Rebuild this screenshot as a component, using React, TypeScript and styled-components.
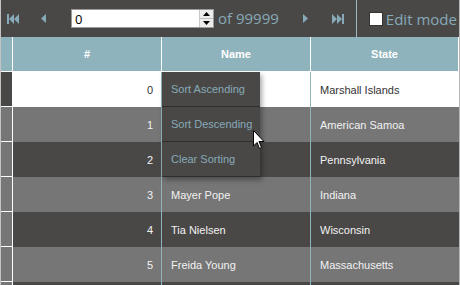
import React from 'react';
import styled, { createGlobalStyle } from 'styled-components';

const GlobalStyle = createGlobalStyle`
  html, body { margin: 0; padding: 0; background: #ffffff; }
  body { font-family: "Liberation Sans", Arial, sans-serif; }
`;

const DARK = '#4a4846';
const GRAY = '#767676';
const HEAD = '#8fb3bc';
const TEAL = '#86aab8';

const Frame = styled.div`
  position: relative;
  width: 460px;
  height: 285px;
  overflow: hidden;
  box-sizing: border-box;
  border-left: 1px solid #c4c4c4;
  border-right: 1px solid #b8b8b8;
  background: ${GRAY};
`;

const Toolbar = styled.div`
  display: flex;
  align-items: center;
  height: 37px;
  background: ${DARK};
  font-family: "Open Sans", "DejaVu Sans", sans-serif;
  color: ${TEAL};
  white-space: nowrap;

  & > * {
    flex-shrink: 0;
  }
`;

const NavButton = styled.button<{ $gap: number }>`
  display: flex;
  align-items: center;
  justify-content: center;
  padding: 0;
  margin-left: ${(p) => p.$gap}px;
  width: 14px;
  height: 14px;
  border: 0;
  background: none;
  color: ${TEAL};
`;

const PageBox = styled.div`
  display: flex;
  align-items: stretch;
  margin-left: 21px;
  width: 143px;
  height: 19px;
  box-sizing: border-box;
  background: #ffffff;
  border: 1px solid #9a9a9a;
`;

const PageInput = styled.input`
  flex: 1;
  min-width: 0;
  border: 0;
  outline: none;
  padding: 0 0 0 3px;
  font-family: "Open Sans", "DejaVu Sans", sans-serif;
  font-size: 13px;
  color: #000;
  background: transparent;
`;

const Spinner = styled.div`
  display: flex;
  flex-direction: column;
  width: 13px;
  border-left: 1px solid #c8c8c8;
  background: #ececec;
`;

const SpinHalf = styled.div<{ $down?: boolean }>`
  flex: 1;
  display: flex;
  align-items: center;
  justify-content: center;
  border-top: ${(p) => (p.$down ? '1px solid #bdbdbd' : '0')};
`;

const OfText = styled.span`
  margin-left: 4px;
  font-size: 15px;
  line-height: 1;
`;

const Separator = styled.div`
  margin-left: 11px;
  align-self: stretch;
  width: 1px;
  background: #9fb9c2;
`;

const EditLabel = styled.label`
  display: flex;
  align-items: center;
  margin-left: 12px;
  font-size: 15px;
`;

const Check = styled.span`
  display: inline-block;
  width: 12px;
  height: 12px;
  margin-right: 3px;
  background: #ffffff;
  border: 1px solid #333;
`;

const Grid = styled.div`
  display: grid;
  grid-template-columns: 12px 149px 149px 148px;
  grid-auto-rows: 35px;
`;

const HeadCell = styled.div`
  display: flex;
  align-items: center;
  justify-content: center;
  height: 34px;
  background: ${HEAD};
  border-right: 1px solid #ffffff;
  border-bottom: 1px solid #ffffff;
  color: #ffffff;
  font-weight: bold;
  font-size: 11px;
`;

const RowHead = styled.div<{ $active?: boolean }>`
  background: ${(p) => (p.$active ? DARK : GRAY)};
  border-right: 1px solid #ffffff;
  border-bottom: 1px solid #ffffff;
`;

const Cell = styled.div<{ $tone: 'white' | 'dark' | 'gray'; $right?: boolean; $last?: boolean }>`
  display: flex;
  align-items: center;
  justify-content: ${(p) => (p.$right ? 'flex-end' : 'flex-start')};
  padding: ${(p) => (p.$right ? '0 8px 0 0' : '0 0 0 9px')};
  background: ${(p) => (p.$tone === 'white' ? '#ffffff' : p.$tone === 'dark' ? DARK : GRAY)};
  color: ${(p) => (p.$tone === 'white' ? '#333333' : '#f2f2f2')};
  border-right: ${(p) => (p.$last ? '0' : `1px solid ${HEAD}`)};
  font-size: 11px;
  white-space: nowrap;
`;

const Menu = styled.div`
  position: absolute;
  left: 161px;
  top: 72px;
  width: 98px;
  background: ${DARK};
  box-shadow: 2px 3px 5px rgba(0, 0, 0, 0.35);
`;

const MenuItem = styled.div`
  display: flex;
  align-items: center;
  height: 34px;
  padding-left: 9px;
  border-bottom: 1px solid #2f2e2d;
  color: ${TEAL};
  font-size: 11px;
  white-space: nowrap;
`;

const Cursor = styled.svg`
  position: absolute;
  left: 252px;
  top: 130px;
`;

const rows = [
  { id: 0, name: '', state: 'Marshall Islands' },
  { id: 1, name: '', state: 'American Samoa' },
  { id: 2, name: '', state: 'Pennsylvania' },
  { id: 3, name: 'Mayer Pope', state: 'Indiana' },
  { id: 4, name: 'Tia Nielsen', state: 'Wisconsin' },
  { id: 5, name: 'Freida Young', state: 'Massachusetts' },
  { id: 6, name: '', state: '' },
];

const toneOf = (i: number) => (i === 0 ? 'white' : i % 2 === 0 ? 'dark' : 'gray') as 'white' | 'dark' | 'gray';

const FirstIcon = () => (
  <svg width="13" height="10" viewBox="0 0 13 10">
    <rect x="0" y="0" width="2" height="10" fill="currentColor" />
    <path d="M7 0 L2 5 L7 10 Z M12 0 L7 5 L12 10 Z" fill="currentColor" />
  </svg>
);
const LastIcon = () => (
  <svg width="13" height="10" viewBox="0 0 13 10">
    <path d="M1 0 L6 5 L1 10 Z M6 0 L11 5 L6 10 Z" fill="currentColor" />
    <rect x="11" y="0" width="2" height="10" fill="currentColor" />
  </svg>
);
const PrevIcon = () => (
  <svg width="5" height="9" viewBox="0 0 5 9">
    <path d="M5 0 L0 4.5 L5 9 Z" fill="currentColor" />
  </svg>
);
const NextIcon = () => (
  <svg width="5" height="9" viewBox="0 0 5 9">
    <path d="M0 0 L5 4.5 L0 9 Z" fill="currentColor" />
  </svg>
);

export default function App() {
  return (
    <>
      <GlobalStyle />
      <Frame>
        <Toolbar>
          <NavButton $gap={5}><FirstIcon /></NavButton>
          <NavButton $gap={16}><PrevIcon /></NavButton>
          <PageBox>
            <PageInput defaultValue="0" />
            <Spinner>
              <SpinHalf>
                <svg width="7" height="4" viewBox="0 0 7 4"><path d="M0 4 L3.5 0 L7 4 Z" fill="#000" /></svg>
              </SpinHalf>
              <SpinHalf $down>
                <svg width="7" height="4" viewBox="0 0 7 4"><path d="M0 0 L3.5 4 L7 0 Z" fill="#000" /></svg>
              </SpinHalf>
            </Spinner>
          </PageBox>
          <OfText>of 99999</OfText>
          <NavButton $gap={20}><NextIcon /></NavButton>
          <NavButton $gap={18}><LastIcon /></NavButton>
          <Separator />
          <EditLabel>
            <Check />
            Edit mode
          </EditLabel>
        </Toolbar>
        <Grid>
          <HeadCell />
          <HeadCell>#</HeadCell>
          <HeadCell>Name</HeadCell>
          <HeadCell>State</HeadCell>
          {rows.map((r, i) => (
            <React.Fragment key={r.id}>
              <RowHead $active={i === 0} />
              <Cell $tone={toneOf(i)} $right>{i < 6 ? r.id : ''}</Cell>
              <Cell $tone={toneOf(i)}>{r.name}</Cell>
              <Cell $tone={toneOf(i)} $last>{r.state}</Cell>
            </React.Fragment>
          ))}
        </Grid>
        <Menu>
          <MenuItem>Sort Ascending</MenuItem>
          <MenuItem>Sort Descending</MenuItem>
          <MenuItem>Clear Sorting</MenuItem>
        </Menu>
        <Cursor width="12" height="20" viewBox="0 0 12 20">
          <path d="M0.5 0.5 L0.5 16 L4 12.5 L6.5 18.5 L8.5 17.5 L6 11.5 L11 11.5 Z" fill="#ffffff" stroke="#000" strokeWidth="1" />
        </Cursor>
      </Frame>
    </>
  );
}
